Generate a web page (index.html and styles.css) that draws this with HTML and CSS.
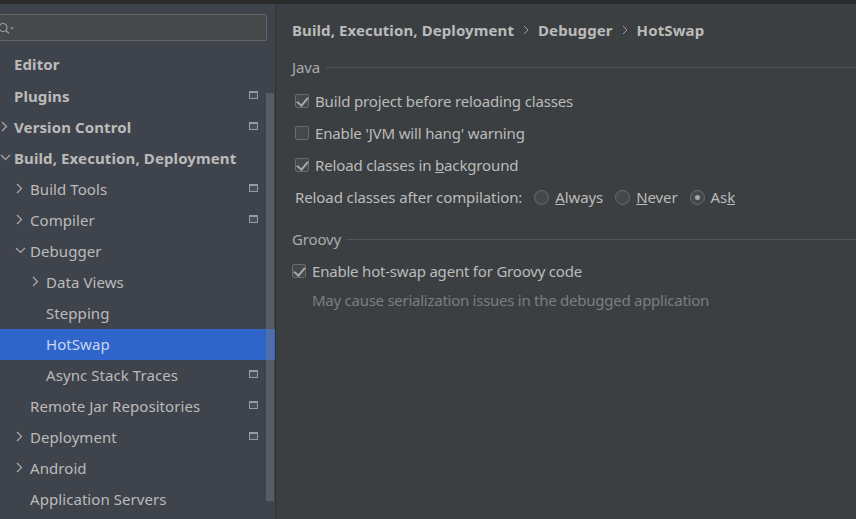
FILE: index.html
```html
<!DOCTYPE html>
<html lang="en">
<head>
  <meta charset="UTF-8" />
  <title>Settings - HotSwap</title>
  <link rel="stylesheet" href="styles.css">
</head>
<body>
  <div class="titlebar"></div>
  <div class="window">
    <aside class="sidebar">
      <div class="search-wrap">
        <div class="search">
          <svg class="search-icon" width="16" height="14" viewBox="0 0 16 14">
            <circle cx="3" cy="6.5" r="4" fill="none" stroke="#9a9d9f" stroke-width="1.2"/>
            <path d="M6 9.5 L9 12.5" stroke="#9a9d9f" stroke-width="1.4"/>
            <path d="M10 6.5 H14 L12 8.5 Z" fill="#9a9d9f"/>
          </svg>
        </div>
      </div>
      <ul class="tree">
        <li class="row top first"><span class="label">Editor</span></li>
        <li class="row top"><span class="label">Plugins</span><i class="proj"></i></li>
        <li class="row top"><svg class="arrow" width="9" height="11" viewBox="0 0 9 11"><path d="M2 1 L6.5 5.5 L2 10"/></svg><span class="label">Version Control</span><i class="proj"></i></li>
        <li class="row top"><svg class="arrow" width="11" height="9" viewBox="0 0 11 9"><path d="M1 2 L5.5 6.5 L10 2"/></svg><span class="label">Build, Execution, Deployment</span></li>
        <li class="row lvl1"><svg class="arrow" width="9" height="11" viewBox="0 0 9 11"><path d="M2 1 L6.5 5.5 L2 10"/></svg><span class="label">Build Tools</span><i class="proj"></i></li>
        <li class="row lvl1"><svg class="arrow" width="9" height="11" viewBox="0 0 9 11"><path d="M2 1 L6.5 5.5 L2 10"/></svg><span class="label">Compiler</span><i class="proj"></i></li>
        <li class="row lvl1"><svg class="arrow" width="11" height="9" viewBox="0 0 11 9"><path d="M1 2 L5.5 6.5 L10 2"/></svg><span class="label">Debugger</span></li>
        <li class="row lvl2"><svg class="arrow" width="9" height="11" viewBox="0 0 9 11"><path d="M2 1 L6.5 5.5 L2 10"/></svg><span class="label">Data Views</span></li>
        <li class="row lvl2"><span class="label">Stepping</span></li>
        <li class="row lvl2 selected"><span class="label">HotSwap</span></li>
        <li class="row lvl2"><span class="label">Async Stack Traces</span><i class="proj"></i></li>
        <li class="row lvl1"><span class="label">Remote Jar Repositories</span><i class="proj"></i></li>
        <li class="row lvl1"><svg class="arrow" width="9" height="11" viewBox="0 0 9 11"><path d="M2 1 L6.5 5.5 L2 10"/></svg><span class="label">Deployment</span><i class="proj"></i></li>
        <li class="row lvl1"><svg class="arrow" width="9" height="11" viewBox="0 0 9 11"><path d="M2 1 L6.5 5.5 L2 10"/></svg><span class="label">Android</span></li>
        <li class="row lvl1"><span class="label">Application Servers</span></li>
      </ul>
      <div class="scrollbar"></div>
    </aside>

    <main class="content">
      <div class="crumbs">
        <span>Build, Execution, Deployment</span>
        <svg width="6" height="10" viewBox="0 0 6 10"><path d="M1 1 L5 5 L1 9"/></svg>
        <span>Debugger</span>
        <svg width="6" height="10" viewBox="0 0 6 10"><path d="M1 1 L5 5 L1 9"/></svg>
        <span>HotSwap</span>
      </div>

      <section class="group">
        <div class="group-title"><span>Java</span><hr></div>
        <div class="opts indented">
          <div class="opt"><i class="check on"></i>Build project before reloading classes</div>
          <div class="opt"><i class="check"></i>Enable 'JVM will hang' warning</div>
          <div class="opt"><i class="check on"></i><span>Reload classes in <u>b</u>ackground</span></div>
          <div class="opt radios">
            <span class="radios-label">Reload classes after compilation:</span>
            <span class="radio-item"><i class="radio"></i><span><u>A</u>lways</span></span>
            <span class="radio-item"><i class="radio"></i><span><u>N</u>ever</span></span>
            <span class="radio-item"><i class="radio on"></i><span>As<u>k</u></span></span>
          </div>
        </div>
      </section>

      <section class="group groovy">
        <div class="group-title"><span>Groovy</span><hr></div>
        <div class="opts">
          <div class="opt agent"><i class="check on"></i>Enable hot-swap agent for Groovy code</div>
          <div class="hint">May cause serialization issues in the debugged application</div>
        </div>
      </section>
    </main>
  </div>
</body>
</html>
```

FILE: styles.css
```css
* {
  box-sizing: border-box;
}

html, body {
  margin: 0;
  height: 100%;
  overflow: hidden;
}

body {
  display: flex;
  flex-direction: column;
  font-family: "Noto Sans", "Open Sans", sans-serif;
  font-size: 15px;
  color: #bbbbbb;
  background: #3c3f41;
}

.titlebar {
  height: 4px;
  background: #2b2b2b;
}

.window {
  flex: 1;
  display: flex;
  min-height: 0;
}

/* Lado izquierdo */
.sidebar {
  position: relative;
  width: 276px;
  flex: none;
  background: #3f434b;
  border-right: 1px solid #323232;
}

.search-wrap {
  height: 46px;
  padding-top: 10px;
}

.search {
  width: 267px;
  height: 27px;
  background: #45494a;
  border: 1px solid #646464;
  border-left: none;
  border-radius: 0 2px 2px 0;
  display: flex;
  align-items: center;
}

.tree {
  list-style: none;
  margin: 0;
  padding: 0;
}

.row {
  position: relative;
  height: 31px;
  display: flex;
  align-items: center;
  padding: 0 17px 1px 0;
  letter-spacing: 0.07px;
  white-space: nowrap;
}

.row.top { padding-left: 14px; font-weight: 700; letter-spacing: 0.11px; }
.row.top.first { padding-bottom: 4px; }
.row.lvl1 { padding-left: 30px; }
.row.lvl2 { padding-left: 46px; }

.row.selected {
  background: #2f65ca;
  color: #c8d6ee;
}

.label {
  flex: 1;
}

.arrow {
  position: absolute;
  margin-bottom: 2px;
  fill: none;
  stroke: #a9acae;
  stroke-width: 1.2;
}

.row.top .arrow { left: 0; }
.row.lvl1 .arrow { left: 15px; }
.row.lvl2 .arrow { left: 31px; }

.proj {
  width: 9px;
  height: 8px;
  margin-bottom: 2px;
  border: 1px solid #8f9ba5;
  border-top-width: 2px;
  background: #4a4e56;
  flex: none;
}

.scrollbar {
  position: absolute;
  left: 266px;
  top: 89px;
  width: 8px;
  height: 408px;
  background: rgba(120, 124, 132, 0.45);
}

/* Panel derecho */
.content {
  flex: 1;
  padding: 14px 0 0 16px;
  min-width: 0;
  letter-spacing: -0.15px;
}

.crumbs {
  display: flex;
  align-items: center;
  gap: 9px;
  height: 24px;
  font-weight: 700;
  letter-spacing: 0.1px;
  white-space: nowrap;
}

.crumbs svg {
  fill: none;
  stroke: #9a9c9e;
  stroke-width: 1;
}

.group {
  margin-top: 15px;
}

.group.groovy {
  margin-top: 16px;
}

.group-title {
  display: flex;
  align-items: center;
  gap: 6px;
  height: 20px;
  color: #a9abad;
}

.group-title hr {
  flex: 1;
  margin: 0;
  border: none;
  border-top: 1px solid #53565a;
}

.opts {
  margin-top: 6px;
}

.opts.indented {
  margin-top: 8px;
  padding-left: 3px;
}

.opt {
  display: flex;
  align-items: center;
  gap: 6px;
  height: 32px;
  white-space: nowrap;
}

.opt.agent {
  letter-spacing: -0.2px;
}

.check {
  width: 14px;
  height: 14px;
  flex: none;
  background: #43494a;
  border: 1px solid #6b6b6b;
  border-radius: 2px;
  position: relative;
}

.check.on::after {
  content: "";
  position: absolute;
  left: 3px;
  top: 0;
  width: 5px;
  height: 9px;
  border: solid #a7a7a7;
  border-width: 0 2px 2px 0;
  transform: rotate(40deg);
}

.radios {
  gap: 0;
  letter-spacing: -0.1px;
}

.radios-label {
  margin-right: 12px;
}

.radio-item {
  display: flex;
  align-items: center;
  gap: 6px;
  margin-right: 12px;
}

.radio {
  width: 15px;
  height: 15px;
  border-radius: 50%;
  background: #43494a;
  border: 1px solid #6b6b6b;
  position: relative;
  flex: none;
}

.radio.on::after {
  content: "";
  position: absolute;
  left: 4px;
  top: 4px;
  width: 5px;
  height: 5px;
  border-radius: 50%;
  background: #a7a7a7;
}

.hint {
  padding-left: 20px;
  height: 26px;
  display: flex;
  align-items: center;
  color: #7b7d7f;
  letter-spacing: -0.26px;
}
```
